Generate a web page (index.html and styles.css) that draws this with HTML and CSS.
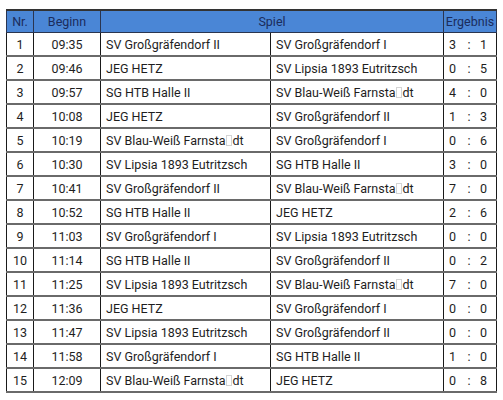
FILE: index.html
```html
<!DOCTYPE html>
<html lang="de">
<head>
<meta charset="utf-8">
<link rel="stylesheet" href="styles.css">
</head>
<body>
<table class="plan">
<colgroup>
<col class="c-nr"><col class="c-time"><col class="c-team"><col class="c-team2"><col class="c-res">
</colgroup>
<thead>
<tr><th>Nr.</th><th>Beginn</th><th colspan="2">Spiel</th><th>Ergebnis</th></tr>
</thead>
<tbody>
<tr><td class="n">1</td><td class="t">09:35</td><td>SV Großgräfendorf II</td><td>SV Großgräfendorf I</td><td class="r"><div class="score"><span>3</span><span>:</span><span>1</span></div></td></tr>
<tr><td class="n">2</td><td class="t">09:46</td><td>JEG HETZ</td><td>SV Lipsia 1893 Eutritzsch</td><td class="r"><div class="score"><span>0</span><span>:</span><span>5</span></div></td></tr>
<tr><td class="n">3</td><td class="t">09:57</td><td>SG HTB Halle II</td><td>SV Blau-Weiß Farnsta<i class="tofu"></i>dt</td><td class="r"><div class="score"><span>4</span><span>:</span><span>0</span></div></td></tr>
<tr><td class="n">4</td><td class="t">10:08</td><td>JEG HETZ</td><td>SV Großgräfendorf II</td><td class="r"><div class="score"><span>1</span><span>:</span><span>3</span></div></td></tr>
<tr><td class="n">5</td><td class="t">10:19</td><td>SV Blau-Weiß Farnsta<i class="tofu"></i>dt</td><td>SV Großgräfendorf I</td><td class="r"><div class="score"><span>0</span><span>:</span><span>6</span></div></td></tr>
<tr><td class="n">6</td><td class="t">10:30</td><td>SV Lipsia 1893 Eutritzsch</td><td>SG HTB Halle II</td><td class="r"><div class="score"><span>3</span><span>:</span><span>0</span></div></td></tr>
<tr><td class="n">7</td><td class="t">10:41</td><td>SV Großgräfendorf II</td><td>SV Blau-Weiß Farnsta<i class="tofu"></i>dt</td><td class="r"><div class="score"><span>7</span><span>:</span><span>0</span></div></td></tr>
<tr><td class="n">8</td><td class="t">10:52</td><td>SG HTB Halle II</td><td>JEG HETZ</td><td class="r"><div class="score"><span>2</span><span>:</span><span>6</span></div></td></tr>
<tr><td class="n">9</td><td class="t">11:03</td><td>SV Großgräfendorf I</td><td>SV Lipsia 1893 Eutritzsch</td><td class="r"><div class="score"><span>0</span><span>:</span><span>0</span></div></td></tr>
<tr><td class="n">10</td><td class="t">11:14</td><td>SG HTB Halle II</td><td>SV Großgräfendorf II</td><td class="r"><div class="score"><span>0</span><span>:</span><span>2</span></div></td></tr>
<tr><td class="n">11</td><td class="t">11:25</td><td>SV Lipsia 1893 Eutritzsch</td><td>SV Blau-Weiß Farnsta<i class="tofu"></i>dt</td><td class="r"><div class="score"><span>7</span><span>:</span><span>0</span></div></td></tr>
<tr><td class="n">12</td><td class="t">11:36</td><td>JEG HETZ</td><td>SV Großgräfendorf I</td><td class="r"><div class="score"><span>0</span><span>:</span><span>0</span></div></td></tr>
<tr><td class="n">13</td><td class="t">11:47</td><td>SV Lipsia 1893 Eutritzsch</td><td>SV Großgräfendorf II</td><td class="r"><div class="score"><span>0</span><span>:</span><span>0</span></div></td></tr>
<tr><td class="n">14</td><td class="t">11:58</td><td>SV Großgräfendorf I</td><td>SG HTB Halle II</td><td class="r"><div class="score"><span>1</span><span>:</span><span>0</span></div></td></tr>
<tr><td class="n">15</td><td class="t">12:09</td><td>SV Blau-Weiß Farnsta<i class="tofu"></i>dt</td><td>JEG HETZ</td><td class="r"><div class="score"><span>0</span><span>:</span><span>8</span></div></td></tr>
</tbody>
</table>
</body>
</html>
```
FILE: styles.css
```css
html, body {
  margin: 0;
  padding: 0;
  background: #ffffff;
}
body {
  padding: 9px 0 0 6px;
  font-family: Roboto, "Liberation Sans", sans-serif;
  font-size: 12.5px;
  color: #1e1e1e;
}
.plan {
  border-collapse: collapse;
  table-layout: fixed;
  width: 490px;
}
.c-nr { width: 27px; }
.c-time { width: 67px; }
.c-team { width: 170px; }
.c-team2 { width: 173px; }
.c-res { width: 53px; }
.plan th {
  background: #4a86d6;
  color: #1b2c5c;
  font-weight: normal;
  height: 21px;
  padding: 0;
  border: 1px solid #2a3550;
  border-top: 2px solid #333;
  text-align: center;
}
.plan td {
  height: 22px;
  padding: 0 0 0 5px;
  border-left: 1px solid #1a1a1a;
  border-right: 1px solid #1a1a1a;
  border-bottom: 2px solid #6a6a6a;
  white-space: nowrap;
  overflow: hidden;
}
.plan td.n,
.plan td.t {
  text-align: center;
  padding: 0;
}
.plan td.r {
  padding: 0 0 0 5px;
}
.score {
  display: flex;
}
.score span:nth-child(1) { width: 11px; text-align: left; }
.score span:nth-child(2) { width: 18px; text-align: center; }
.score span:nth-child(3) { width: 9px; text-align: right; }
.tofu {
  display: inline-block;
  width: 4px;
  height: 9px;
  border: 1px solid #d4d4d4;
  vertical-align: -1px;
  margin: 0 0.5px;
}
```
